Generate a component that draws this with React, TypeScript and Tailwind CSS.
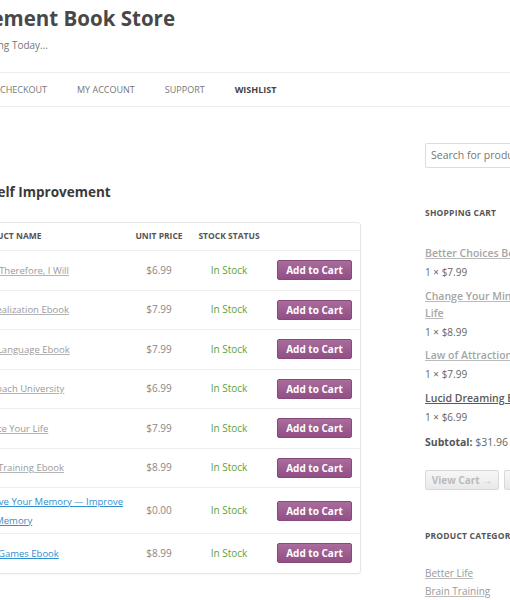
import { ReactNode } from "react";

type Product = { name: ReactNode; price: string; link?: boolean; tall?: boolean };

const products: Product[] = [
  { name: "I Can, Therefore, I Will", price: "$6.99" },
  { name: "Self Realization Ebook", price: "$7.99" },
  { name: "Body Language Ebook", price: "$7.99" },
  { name: "Life Coach University", price: "$6.99" },
  { name: "Balance Your Life", price: "$7.99" },
  { name: "Brain Training Ebook", price: "$8.99" },
  { name: "Improve Your Memory \u2014 Improve Your Memory", price: "$0.00", link: true, tall: true },
  { name: "Brain Games Ebook", price: "$8.99", link: true },
];

const cart = [
  { name: "Better Choices Better Life", qty: "1 \u00d7 $7.99" },
  { name: "Change Your Mind Change Your Life", qty: "1 \u00d7 $8.99" },
  { name: "Law of Attraction Ebook", qty: "1 \u00d7 $7.99" },
  { name: "Lucid Dreaming Ebook", qty: "1 \u00d7 $6.99", dark: true },
];

const nav = ["CHECKOUT", "MY ACCOUNT", "SUPPORT", "WISHLIST"];

export default function App() {
  return (
    <div className="w-[510px] h-[600px] overflow-hidden bg-white text-[#666] font-['Open_Sans',sans-serif]">
      {/* site branding - left part of the title is scrolled off the page */}
      <div className="pt-[4px] h-[72px] whitespace-nowrap">
        <div className="w-[175px] flex justify-end text-[20.5px] leading-[28px] font-bold text-[#484848]">
          <span className="shrink-0">Self Improvement Book Store</span>
        </div>
        <div className="w-[48px] flex justify-end mt-[5px] text-[10px] leading-[16px] text-[#777]">
          <span className="shrink-0">Start Improving Today...</span>
        </div>
      </div>

      {/* primary navigation */}
      <div className="border-y border-[#ececec] h-[35px] flex items-center">
        <div className="flex gap-[30px] text-[9px] text-[#777] whitespace-nowrap">
          {nav.map(item => (
            <span key={item} className={item === "WISHLIST" ? "font-bold text-[#444]" : ""}>
              {item}
            </span>
          ))}
        </div>
      </div>

      <div className="flex -ml-[40px]">
        {/* main content */}
        <div className="w-[401px] shrink-0">
          <h1 className="mt-[75px] ml-[30px] text-[13.5px] leading-[20px] font-bold text-[#3a3a3a] whitespace-nowrap">
            Self Improvement
          </h1>

          <div className="mt-[20px] border border-[#e6e6e6] rounded-[3px] shadow-[0_1px_2px_rgba(0,0,0,0.04)]">
            <div className="grid grid-cols-[166px_64px_76px_95px] h-[27px] items-center text-[8.5px] font-bold text-[#555] whitespace-nowrap">
              <div className="pl-[12px]">PRODUCT NAME</div>
              <div className="text-center">UNIT PRICE</div>
              <div className="text-center">STOCK STATUS</div>
              <div />
            </div>
            {products.map((p, i) => (
              <div
                key={i}
                className={
                  "grid grid-cols-[166px_64px_76px_95px] items-center border-t border-[#efefef] text-[10px] " +
                  (p.tall ? "min-h-[46px]" : "min-h-[39.5px]")
                }
              >
                <div className="pl-[11px] text-[9.5px] leading-[19px]">
                  <span className={p.link ? "underline text-[#2f8fcf] decoration-[#2f8fcf]" : "underline text-[#9a9a9a] decoration-[#b5b5b5]"}>
                    {p.name}
                  </span>
                </div>
                <div className="text-center text-[#888]">{p.price}</div>
                <div className="text-center text-[#5ca23a]">In Stock</div>
                <div className="pl-[10px]">
                  <button className="w-[75px] h-[20px] rounded-[2px] bg-gradient-to-b from-[#a96c9c] to-[#924f86] border border-[#874a7c] text-white text-[10px] font-bold leading-none">
                    Add to Cart
                  </button>
                </div>
              </div>
            ))}
          </div>
        </div>

        {/* sidebar */}
        <div className="ml-[64px] w-[178px] shrink-0 pt-[36px]">
          <div className="h-[25px] border border-[#dcdcdc] rounded-[2px] flex items-center pl-[5px] text-[10.5px] text-[#777] whitespace-nowrap overflow-hidden">
            Search for products...
          </div>

          <div className="mt-[39px] text-[8.5px] leading-[12px] font-bold text-[#555] tracking-[0.2px]">SHOPPING CART</div>

          <div className="mt-[26px]">
            {cart.map(item => (
              <div key={item.name} className="mb-[5.5px]">
                <div
                  className={
                    "text-[10.5px] leading-[17px] font-semibold underline " +
                    (item.dark ? "text-[#5a5a5a]" : "text-[#a5a5a5] decoration-[#bbb]")
                  }
                >
                  {item.name}
                </div>
                <div className="text-[10px] leading-[20px] text-[#666]">{item.qty}</div>
              </div>
            ))}
          </div>

          <div className="pt-[1px] text-[10.5px] leading-[19px]">
            <span className="font-bold text-[#555]">Subtotal:</span> <span className="text-[#666]">$31.96</span>
          </div>

          <div className="mt-[18px] flex gap-[5px]">
            <button className="w-[74px] h-[20px] shrink-0 rounded-[2px] border border-[#d8d8d8] bg-gradient-to-b from-[#f7f7f7] to-[#e9e9e9] text-[10px] font-bold text-[#bbb] leading-none whitespace-nowrap">
              View Cart {"\u2192"}
            </button>
            <button className="w-[74px] h-[20px] shrink-0 rounded-[2px] border border-[#d8d8d8] bg-gradient-to-b from-[#f7f7f7] to-[#e9e9e9] text-[10px] font-bold text-[#bbb] leading-none whitespace-nowrap">
              Checkout {"\u2192"}
            </button>
          </div>

          <div className="mt-[40px] text-[8.5px] leading-[12px] font-bold text-[#555] tracking-[0.2px] whitespace-nowrap">
            PRODUCT CATEGORIES
          </div>

          <div className="mt-[22px] text-[10px] leading-[18px] text-[#999]">
            <div className="underline decoration-[#bbb]">Better Life</div>
            <div className="underline decoration-[#bbb]">Brain Training</div>
          </div>
        </div>
      </div>
    </div>
  );
}
